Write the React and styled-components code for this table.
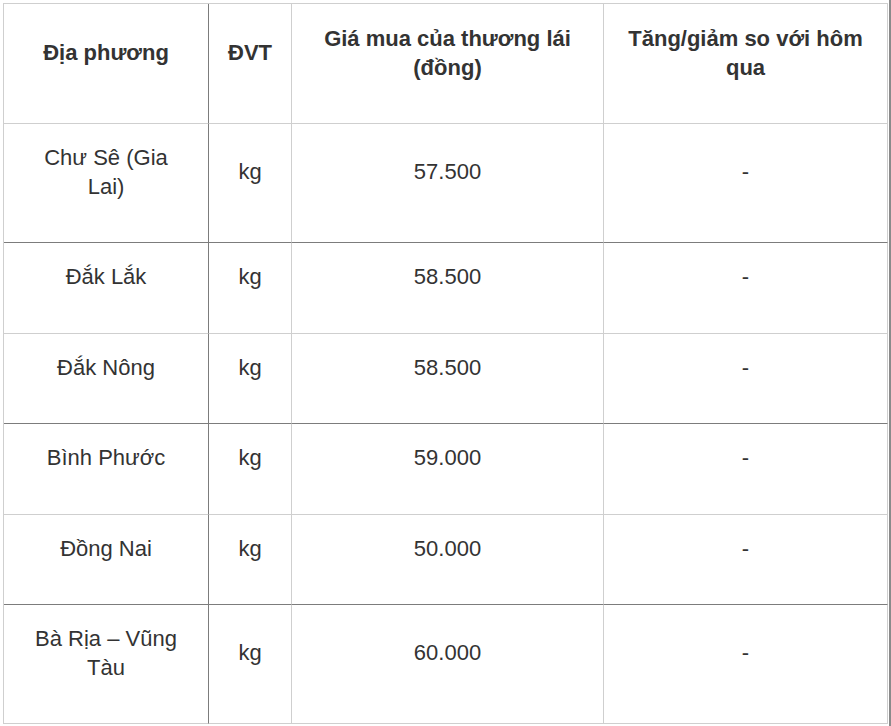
import React from 'react';
import styled, { createGlobalStyle } from 'styled-components';

const GlobalStyle = createGlobalStyle`
  html, body {
    margin: 0;
    padding: 0;
    background: #fff;
  }
`;

const Page = styled.div`
  box-sizing: border-box;
  width: 891px;
  min-height: 726px;
  padding: 3px 0 0 3px;
  border-right: 2px solid #8a8a8a;
`;

const Table = styled.table`
  border-collapse: separate;
  border-spacing: 0;
  table-layout: fixed;
  width: 885px;
  border-top: 1px solid #cfcfcf;
  border-left: 1px solid #cfcfcf;
  font-family: "Liberation Sans", Arial, sans-serif;
  font-size: 22px;
  line-height: 28.5px;
  color: #333;
`;

const Cell = styled.td`
  padding: ${p => (p.$head ? '21px' : '20px')} ${p => (p.$narrow ? '8px' : '20px')} 41px;
  text-align: center;
  vertical-align: middle;
  border-right: 1px solid ${p => (p.$strong ? '#7c7c7c' : '#cfcfcf')};
  border-bottom: 1px solid ${p => (p.$dark ? '#7c7c7c' : '#cfcfcf')};
  font-weight: ${p => (p.$head ? 700 : 400)};
  word-wrap: break-word;
`;

const columns = [205, 83, 312, 284];

const rows = [
  { place: 'Chư Sê (Gia Lai)', price: '57.500', dark: true },
  { place: 'Đắk Lắk', price: '58.500' },
  { place: 'Đắk Nông', price: '58.500', dark: true },
  { place: 'Bình Phước', price: '59.000' },
  { place: 'Đồng Nai', price: '50.000', dark: true },
  { place: 'Bà Rịa – Vũng Tàu', price: '60.000' },
];

export default function App() {
  return (
    <Page>
      <GlobalStyle />
      <Table>
        <colgroup>
          {columns.map((w, i) => (
            <col key={i} style={{ width: w }} />
          ))}
        </colgroup>
        <thead>
          <tr>
            <Cell as="th" $head $strong>Địa phương</Cell>
            <Cell as="th" $head $narrow>ĐVT</Cell>
            <Cell as="th" $head>Giá mua của thương lái (đồng)</Cell>
            <Cell as="th" $head>Tăng/giảm so với hôm qua</Cell>
          </tr>
        </thead>
        <tbody>
          {rows.map(r => (
            <tr key={r.place}>
              <Cell $strong $dark={r.dark}>{r.place}</Cell>
              <Cell $narrow $dark={r.dark}>kg</Cell>
              <Cell $dark={r.dark}>{r.price}</Cell>
              <Cell $dark={r.dark}>-</Cell>
            </tr>
          ))}
        </tbody>
      </Table>
    </Page>
  );
}
